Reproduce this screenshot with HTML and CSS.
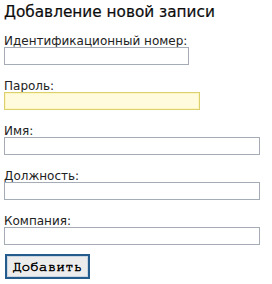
FILE: index.html
```html
<!DOCTYPE html>
<html>
<head>
<meta charset="utf-8">
<link rel="stylesheet" href="styles.css">
</head>
<body>
<h1 class="title">Добавление новой записи</h1>
<form class="form">
  <div class="field">
    <label class="label">Идентификационный номер:</label>
    <input class="input w-id" type="text">
  </div>
  <div class="field">
    <label class="label">Пароль:</label>
    <input class="input input-hl w-pass" type="password">
  </div>
  <div class="field">
    <label class="label">Имя:</label>
    <input class="input w-full" type="text">
  </div>
  <div class="field">
    <label class="label">Должность:</label>
    <input class="input w-full" type="text">
  </div>
  <div class="field">
    <label class="label">Компания:</label>
    <input class="input w-full" type="text">
  </div>
  <button class="btn" type="button">Добавить</button>
</form>
</body>
</html>
```
FILE: styles.css
```css
html, body {
  margin: 0;
  padding: 0;
  background: #ffffff;
}
body {
  padding: 0 4px;
  font-family: "DejaVu Sans", Verdana, sans-serif;
  color: #111111;
}
.title {
  margin: 0;
  padding-top: 3px;
  height: 32px;
  font-size: 15.3px;
  line-height: 18px;
  font-weight: normal;
  color: #0c0c0c;
  -webkit-text-stroke: 0.2px #0c0c0c;
}
.form {
  display: flex;
  flex-direction: column;
  align-items: flex-start;
}
.field {
  display: flex;
  flex-direction: column;
  align-items: flex-start;
  margin-bottom: 15px;
}
.label {
  font-size: 12px;
  line-height: 12px;
  height: 12px;
  color: #222222;
}
.input {
  box-sizing: border-box;
  height: 18px;
  margin: 0;
  padding: 0 2px;
  border: 1px solid #a5acb5;
  background: #ffffff;
  outline: none;
}
.input-hl {
  border-color: #dccf6e;
  background: #fffbdc;
  box-shadow: inset 0 0 0 1px #fdf6c0;
}
.w-id { width: 185px; }
.w-pass { width: 196px; }
.w-full { width: 256px; }
.btn {
  box-sizing: border-box;
  margin: -6px 0 0 1px;
  width: 85px;
  height: 25px;
  padding: 0;
  border: 2px solid #245d8d;
  box-shadow: inset 0 0 0 1px #c9d6e2;
  background: #ececec;
  font-family: "Nimbus Mono PS", "FreeMono", "Courier New", "Liberation Mono", monospace;
  font-size: 14.5px;
  color: #000000;
  -webkit-text-stroke: 0.5px #000000;
}
```
